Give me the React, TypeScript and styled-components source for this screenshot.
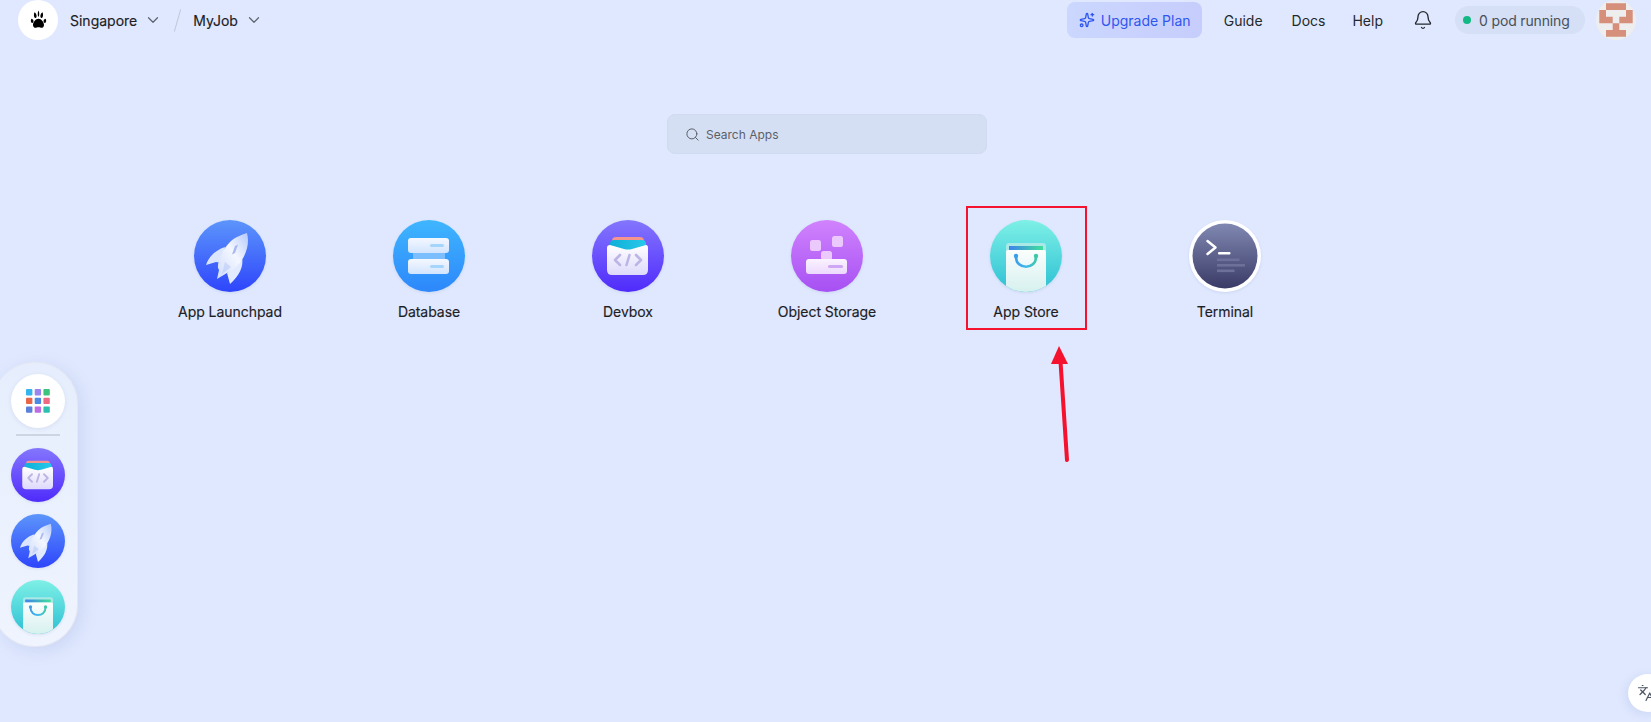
import React from 'react';
import styled, { createGlobalStyle } from 'styled-components';
import { ChevronDown, Search, Bell, Sparkles, Languages } from 'lucide-react';

const Global = createGlobalStyle`
  html, body { margin: 0; padding: 0; height: 100%; }
  body { font-family: Inter, "Liberation Sans", sans-serif; background: #dfe8fe; overflow: hidden; }
  #root { height: 100%; }
`;

const Page = styled.div`
  position: relative;
  width: 1651px;
  height: 722px;
  overflow: hidden;
  background: #dfe8fe;
  color: #24282c;
`;

const TopBar = styled.header`
  display: flex;
  align-items: center;
  height: 40px;
  padding: 0 15px 0 18px;
`;

const LogoCircle = styled.div`
  width: 40px;
  height: 40px;
  border-radius: 50%;
  background: #fff;
  display: flex;
  align-items: center;
  justify-content: center;
  margin-right: 12px;
`;

const Crumb = styled.span`
  font-size: 14px;
  font-weight: 400;
  color: #1c2024;
  margin-right: 7px;
  -webkit-text-stroke: 0.15px #1c2024;
`;

const Chevron = styled(ChevronDown)`
  width: 18px;
  height: 18px;
  color: #5a646e;
  stroke-width: 1.6;
`;

const Slash = styled.div`
  width: 1px;
  height: 23px;
  background: #c0c8d8;
  transform: rotate(16deg);
  margin: 0 15px;
`;

const Spacer = styled.div`
  flex: 1;
`;

const Upgrade = styled.div`
  display: flex;
  align-items: center;
  gap: 6px;
  width: 135px;
  height: 36px;
  flex: none;
  box-sizing: border-box;
  padding-left: 12px;
  border-radius: 8px;
  background: linear-gradient(90deg, #cbd7fe, #c6cdfc);
  color: #2f56f0;
  font-size: 14px;
  font-weight: 400;
  white-space: nowrap;
  margin-right: 22px;
`;

const NavLink = styled.span<{ $gap: number }>`
  font-size: 14px;
  font-weight: 400;
  color: #24282c;
  margin-right: ${p => p.$gap}px;
`;

const PodPill = styled.div`
  display: flex;
  align-items: center;
  width: 130px;
  height: 28px;
  flex: none;
  box-sizing: border-box;
  padding-left: 8px;
  border-radius: 14px;
  background: #d5dff6;
  font-size: 14px;
  letter-spacing: -0.15px;
  color: #485058;
  margin: 0 11px 0 22px;
  white-space: nowrap;
`;

const Dot = styled.span`
  width: 8px;
  height: 8px;
  border-radius: 50%;
  background: #13b982;
  margin-right: 8px;
`;

const Avatar = styled.div`
  width: 40px;
  height: 40px;
  flex: none;
  border-radius: 50%;
  background: #efeeee;
  overflow: hidden;
`;

const SearchRow = styled.div`
  display: flex;
  justify-content: center;
  padding: 74px 0 0 3px;
`;

const SearchBox = styled.div`
  width: 320px;
  height: 40px;
  box-sizing: border-box;
  display: flex;
  align-items: center;
  gap: 6px;
  padding-left: 17px;
  border-radius: 8px;
  background: #d5dff3;
  border: 1px solid #d0daf0;
  font-size: 12px;
  color: #5a5f68;
`;

const AppGrid = styled.div`
  display: grid;
  grid-template-columns: repeat(6, 199px);
  padding: 66px 0 0 130px;
`;

const AppTile = styled.div`
  display: flex;
  flex-direction: column;
  align-items: center;
  gap: 11px;
`;

const AppName = styled.span`
  font-size: 14px;
  font-weight: 400;
  line-height: 18px;
  color: #1c2024;
  white-space: nowrap;
  letter-spacing: -0.05px;
  padding-left: 1px;
  -webkit-text-stroke: 0.15px #1c2024;
`;

const IconFrame = styled.div<{ $size: number }>`
  width: ${p => p.$size}px;
  height: ${p => p.$size}px;
  border-radius: 50%;
  overflow: hidden;
  flex: none;
  box-shadow: 0 1px 3px rgba(60, 80, 140, 0.12);
  svg { display: block; width: 100%; height: 100%; }
`;

const Highlight = styled.div`
  position: absolute;
  left: 966px;
  top: 206px;
  width: 121px;
  height: 124px;
  box-sizing: border-box;
  border: 2px solid #f4122f;
`;

const Arrow = styled.svg`
  position: absolute;
  left: 1045px;
  top: 340px;
  width: 30px;
  height: 130px;
`;

const Dock = styled.nav`
  position: absolute;
  left: -8px;
  top: 362px;
  width: 86px;
  height: 285px;
  box-sizing: border-box;
  padding: 11px 0 0 18px;
  border-radius: 42px;
  background: linear-gradient(180deg, #e6eefd 0%, #eff4fe 100%);
  border: 1px solid #e4e8f2;
  box-shadow: 4px 4px 16px rgba(120, 140, 200, 0.18);
  display: flex;
  flex-direction: column;
  gap: 12px;
`;

const DockHome = styled.div`
  width: 54px;
  height: 54px;
  border-radius: 50%;
  background: #fff;
  display: flex;
  align-items: center;
  justify-content: center;
  box-shadow: 0 1px 4px rgba(60, 80, 140, 0.1);
`;

const DockRule = styled.div`
  width: 44px;
  height: 2px;
  background: #cdd5e4;
  margin: -6px 0 0 5px;
  align-self: flex-start;
`;

const Translate = styled.div`
  position: absolute;
  left: 1628px;
  top: 674px;
  width: 40px;
  height: 38px;
  border-radius: 50%;
  background: #fff;
  color: #4b5563;
  display: flex;
  align-items: center;
  padding-left: 9px;
  box-sizing: border-box;
  box-shadow: -2px 2px 10px rgba(120, 140, 200, 0.18);
`;

const Rocket = ({ id }: { id: string }) => (
  <svg viewBox="0 0 72 72">
    <defs>
      <linearGradient id={id + 'bg'} x1="0" y1="0" x2="0" y2="1">
        <stop offset="0" stopColor="#5c95fb" />
        <stop offset="1" stopColor="#2e45fb" />
      </linearGradient>
      <linearGradient id={id + 'fg'} x1="1" y1="0" x2="0" y2="1">
        <stop offset="0" stopColor="#b4c9fb" />
        <stop offset="0.45" stopColor="#f4f7ff" />
        <stop offset="1" stopColor="#cfdcfc" />
      </linearGradient>
    </defs>
    <rect width="72" height="72" fill={`url(#${id}bg)`} />
    <path d="M12 45 C15 36 22 30 31 27 L28 43 L22 42 Z" fill="#dbe5fe" />
    <path d="M48 37 C50 47 45 56 36 64 L33 53 L41 46 Z" fill="#e2eafe" />
    <path d="M53 13 C56 24 52 36 44 45 C40 49 37 51 33 53 L23 59 L25 50 C23 47 24 44 25 41 C27 34 30 28 36 22 C41 17 47 15 53 13 Z" fill={`url(#${id}fg)`} />
    <path d="M41 26 L44 24.5 L41 33 L38 34.5 Z" fill="#a8b8f0" />
    <path d="M31 42 L37 47 L28 54 Z" fill="#b9c9f7" opacity="0.6" />
  </svg>
);

const DatabaseIcon = () => (
  <svg viewBox="0 0 72 72">
    <defs>
      <linearGradient id="dbbg" x1="0" y1="0" x2="0" y2="1">
        <stop offset="0" stopColor="#3fb6fe" />
        <stop offset="1" stopColor="#2d87fb" />
      </linearGradient>
      <linearGradient id="dbfg" x1="0" y1="0" x2="0" y2="1">
        <stop offset="0" stopColor="#f4f8ff" />
        <stop offset="1" stopColor="#d2e4fe" />
      </linearGradient>
    </defs>
    <rect width="72" height="72" fill="url(#dbbg)" />
    <rect x="20" y="30" width="32" height="14" fill="#a9d4fd" opacity="0.6" />
    <rect x="15" y="18" width="41" height="15" rx="3" fill="url(#dbfg)" />
    <rect x="15" y="39" width="41" height="15" rx="3" fill="url(#dbfg)" />
    <rect x="37" y="24" width="14" height="3" rx="1.5" fill="#a5d5fb" />
    <rect x="37" y="45" width="14" height="3" rx="1.5" fill="#a5d5fb" />
  </svg>
);

const DevboxIcon = ({ id }: { id: string }) => (
  <svg viewBox="0 0 72 72">
    <defs>
      <linearGradient id={id + 'bg'} x1="0" y1="0" x2="0" y2="1">
        <stop offset="0" stopColor="#8476fe" />
        <stop offset="1" stopColor="#4f2bfb" />
      </linearGradient>
      <linearGradient id={id + 'fg'} x1="0" y1="0" x2="0" y2="1">
        <stop offset="0" stopColor="#ffffff" />
        <stop offset="1" stopColor="#ddd9fb" />
      </linearGradient>
      <linearGradient id={id + 'tab'} x1="0" y1="0" x2="1" y2="0">
        <stop offset="0" stopColor="#0fb0d8" />
        <stop offset="1" stopColor="#27c8e8" />
      </linearGradient>
    </defs>
    <rect width="72" height="72" fill={`url(#${id}bg)`} />
    <path d="M20 21 Q20 17 24 17 H48 Q52 17 52 21 V25 H20 Z" fill="#f3948f" />
    <path d="M18 24 Q18 20 22 20 H50 Q54 20 54 24 V30 H18 Z" fill={`url(#${id}tab)`} />
    <path d="M15 28 Q15 25 18 25 L32 29 Q36 30 40 29 L54 25 Q56 25 56 28 V50 Q56 55 51 55 H20 Q15 55 15 50 Z" fill={`url(#${id}fg)`} />
    <path d="M28 35 L23 40 L28 45 M44 35 L49 40 L44 45 M37.5 35 L34.5 45" fill="none" stroke="#bcb6e6" strokeWidth="2.6" strokeLinecap="round" strokeLinejoin="round" />
  </svg>
);

const ObjectIcon = () => (
  <svg viewBox="0 0 72 72">
    <defs>
      <linearGradient id="osbg" x1="0" y1="0" x2="0" y2="1">
        <stop offset="0" stopColor="#d183fd" />
        <stop offset="1" stopColor="#a650f3" />
      </linearGradient>
      <linearGradient id="osfg" x1="0" y1="0" x2="0" y2="1">
        <stop offset="0" stopColor="#faf3ff" />
        <stop offset="1" stopColor="#ecd8fd" />
      </linearGradient>
    </defs>
    <rect width="72" height="72" fill="url(#osbg)" />
    <rect x="19" y="20" width="11" height="11" rx="2.5" fill="#ecc9fd" />
    <rect x="41" y="16" width="11" height="11" rx="2.5" fill="#ecc9fd" />
    <rect x="30" y="31" width="11" height="9" rx="2.5" fill="#ecc9fd" />
    <rect x="15" y="39" width="41" height="15" rx="3" fill="url(#osfg)" />
    <rect x="37" y="45" width="15" height="3" rx="1.5" fill="#cda6f4" />
  </svg>
);

const StoreIcon = ({ id }: { id: string }) => (
  <svg viewBox="0 0 72 72">
    <defs>
      <linearGradient id={id + 'bg'} x1="0" y1="0" x2="0" y2="1">
        <stop offset="0" stopColor="#7ef0e6" />
        <stop offset="1" stopColor="#2cc0d4" />
      </linearGradient>
      <linearGradient id={id + 'fg'} x1="0" y1="0" x2="0" y2="1">
        <stop offset="0" stopColor="#fbfefd" />
        <stop offset="1" stopColor="#d4f0ee" />
      </linearGradient>
      <linearGradient id={id + 'st'} x1="0" y1="0" x2="1" y2="0">
        <stop offset="0" stopColor="#3f82ec" />
        <stop offset="1" stopColor="#3fe09a" />
      </linearGradient>
      <linearGradient id={id + 'hd'} x1="0" y1="0" x2="1" y2="0">
        <stop offset="0" stopColor="#3b9fe8" />
        <stop offset="0.5" stopColor="#43b8ee" />
        <stop offset="1" stopColor="#3fc8a8" />
      </linearGradient>
    </defs>
    <rect width="72" height="72" fill={`url(#${id}bg)`} />
    <path d="M16 26 Q16 23 19 23 H53 Q56 23 56 26 V36 H16 Z" fill="#a8e8e6" />
    <rect x="19" y="26" width="34" height="4" fill={`url(#${id}st)`} />
    <rect x="16" y="30" width="40" height="44" rx="2" fill={`url(#${id}fg)`} />
    <path d="M26 37 C26 50 46 50 46 37" fill="none" stroke={`url(#${id}hd)`} strokeWidth="2.6" strokeLinecap="round" />
    <circle cx="26" cy="36" r="2.2" fill="#3b9fe8" />
    <circle cx="46" cy="36" r="2.2" fill="#3fc8a8" />
  </svg>
);

const TerminalIcon = () => (
  <svg viewBox="0 0 72 72">
    <defs>
      <linearGradient id="tmbg" x1="0" y1="0" x2="0" y2="1">
        <stop offset="0" stopColor="#8088b2" />
        <stop offset="1" stopColor="#3a3b66" />
      </linearGradient>
    </defs>
    <rect width="72" height="72" fill="#fff" />
    <circle cx="36" cy="36" r="32.5" fill="url(#tmbg)" />
    <path d="M18.5 21 L26.5 27.5 L18.5 34" fill="none" stroke="#fff" strokeWidth="2.5" strokeLinecap="round" strokeLinejoin="round" />
    <rect x="29" y="32" width="12.5" height="2.4" rx="1" fill="#fff" />
    <rect x="28" y="38.5" width="22.5" height="2.6" fill="#6d7199" />
    <rect x="28" y="44" width="28" height="2.6" fill="#6d7199" />
    <rect x="28" y="49.5" width="17.5" height="2.6" fill="#6d7199" />
  </svg>
);

const GridGlyph = () => {
  const colors = ['#35b4ee', '#9a85ee', '#3cc47e', '#e8654a', '#4a8ae4', '#ee6a84', '#5a80dc', '#bd6ce4', '#2dc0b0'];
  return (
    <svg width="24" height="24" viewBox="0 0 24 24" style={{ display: 'block' }}>
      {colors.map((c, i) => (
        <rect key={c} x={(i % 3) * 8.7} y={Math.floor(i / 3) * 8.7} width="6.4" height="6.4" rx="1" fill={c} />
      ))}
    </svg>
  );
};

const Paw = () => (
  <svg width="17" height="20" viewBox="0 0 18 22">
    <path d="M9 9.5 C12 9.5 15.5 13.5 15 17 C14.7 19.5 12.5 20 11 19.3 C9.8 18.8 8.2 18.8 7 19.3 C5.5 20 3.3 19.5 3 17 C2.5 13.5 6 9.5 9 9.5 Z" fill="#000" />
    <path d="M1.2 9.5 C0 11 0.6 13.8 2 14.2 C3.4 14.4 3.8 12.3 3.2 11 C2.8 10.2 2 9.6 1.2 9.5 Z" fill="#000" />
    <path d="M16.8 9.5 C18 11 17.4 13.8 16 14.2 C14.6 14.4 14.2 12.3 14.8 11 C15.2 10.2 16 9.6 16.8 9.5 Z" fill="#000" />
    <path d="M4.8 2.5 C3.6 4 3.7 8 5.3 8.8 C6.8 9.2 7.4 6.8 6.6 5 C6.2 4 5.6 3 4.8 2.5 Z" fill="#000" />
    <path d="M13.2 2.5 C14.4 4 14.3 8 12.7 8.8 C11.2 9.2 10.6 6.8 11.4 5 C11.8 4 12.4 3 13.2 2.5 Z" fill="#000" />
    <path d="M9 0.5 C8 2.5 7.8 6 9 7.8 C10.2 6 10 2.5 9 0.5 Z" fill="#000" />
  </svg>
);

const Identicon = () => (
  <svg viewBox="0 0 40 40" width="40" height="40" style={{ display: 'block' }}>
    <path
      d="M10 3.3 H30 V10 H36.7 V23.3 H23.3 V30 H30 V36.7 H10 V30 H16.7 V23.3 H3.3 V10 H10 Z M10 10 V16.7 H16.7 V23.3 H23.3 V16.7 H30 V10 Z"
      fill="#d68f7b"
      fillRule="evenodd"
    />
  </svg>
);

const apps = [
  { name: 'App Launchpad', icon: <Rocket id="r1" /> },
  { name: 'Database', icon: <DatabaseIcon /> },
  { name: 'Devbox', icon: <DevboxIcon id="d1" /> },
  { name: 'Object Storage', icon: <ObjectIcon /> },
  { name: 'App Store', icon: <StoreIcon id="s1" /> },
  { name: 'Terminal', icon: <TerminalIcon /> },
];

export default function App() {
  return (
    <Page>
      <Global />
      <TopBar>
        <LogoCircle><Paw /></LogoCircle>
        <Crumb>Singapore</Crumb>
        <Chevron />
        <Slash />
        <Crumb>MyJob</Crumb>
        <Chevron />
        <Spacer />
        <Upgrade><Sparkles size={16} />Upgrade Plan</Upgrade>
        <NavLink $gap={29}>Guide</NavLink>
        <NavLink $gap={27}>Docs</NavLink>
        <NavLink $gap={30}>Help</NavLink>
        <Bell size={20} strokeWidth={1.6} color="#24282c" />
        <PodPill><Dot />0 pod running</PodPill>
        <Avatar><Identicon /></Avatar>
      </TopBar>
      <SearchRow>
        <SearchBox><Search size={15} strokeWidth={1.6} />Search Apps</SearchBox>
      </SearchRow>
      <AppGrid>
        {apps.map(a => (
          <AppTile key={a.name}>
            <IconFrame $size={72}>{a.icon}</IconFrame>
            <AppName>{a.name}</AppName>
          </AppTile>
        ))}
      </AppGrid>
      <Highlight />
      <Arrow viewBox="0 0 30 130">
        <path d="M22 120 L15 14" stroke="#f4122f" strokeWidth="4" strokeLinecap="round" fill="none" />
        <path d="M14 6 L23 24 L6 24 Z" fill="#f4122f" />
      </Arrow>
      <Dock>
        <DockHome><GridGlyph /></DockHome>
        <DockRule />
        <IconFrame $size={54}><DevboxIcon id="d2" /></IconFrame>
        <IconFrame $size={54}><Rocket id="r2" /></IconFrame>
        <IconFrame $size={54}><StoreIcon id="s2" /></IconFrame>
      </Dock>
      <Translate><Languages size={18} strokeWidth={1.6} /></Translate>
    </Page>
  );
}
